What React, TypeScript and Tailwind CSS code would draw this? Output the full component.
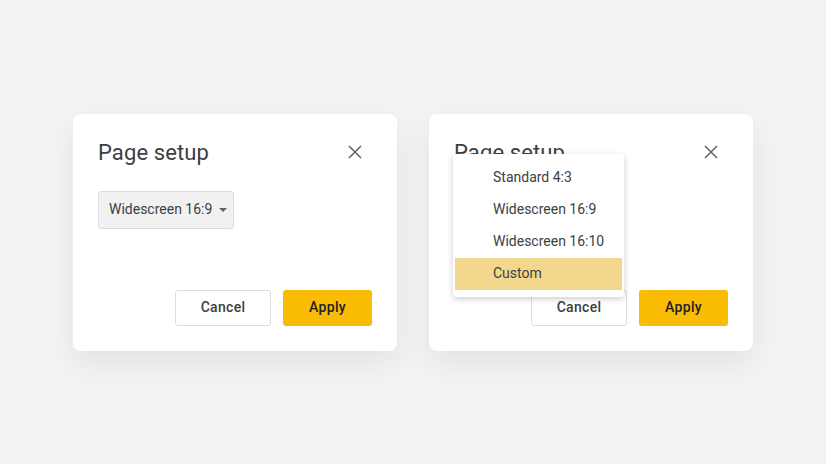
import { useState } from "react";

const sizes = ["Standard 4:3", "Widescreen 16:9", "Widescreen 16:10", "Custom"];

function CloseIcon() {
  return (
    <svg width="14" height="14" viewBox="0 0 14 14" aria-hidden="true">
      <path d="M1.5 1.5 L12.5 12.5 M12.5 1.5 L1.5 12.5" stroke="#5f6368" strokeWidth="1.5" strokeLinecap="square" />
    </svg>
  );
}

function Caret() {
  return (
    <svg width="8" height="4" viewBox="0 0 8 4" aria-hidden="true">
      <path d="M0 0 L8 0 L4 4 Z" fill="#5f6368" />
    </svg>
  );
}

function Dialog({ open }: { open: boolean }) {
  const [selected] = useState("Widescreen 16:9");

  return (
    <div className="relative w-[324px] h-[237px] bg-white rounded-[8px] shadow-[0_12px_32px_rgba(0,0,0,0.07)] flex flex-col pl-[25px] pr-[25px] pt-[27px] pb-[25px]">
      {/* header */}
      <div className="flex items-center justify-between h-[24px]">
        <h2 className="text-[22px] leading-[24px] text-[#3c4043] font-['Roboto',sans-serif] tracking-[0.1px]">
          Page setup
        </h2>
        <button className="mr-[10px] -mt-[1px] flex items-center justify-center">
          <CloseIcon />
        </button>
      </div>

      <div className="mt-[26px]">
        <button className="h-[38px] w-[136px] flex items-center pl-[10px] gap-[7px] bg-[#f1f1f1] border border-[#dcdcdc] rounded-[3px] text-[14px] text-[#3c4043] font-['Roboto',sans-serif]">
          <span>{selected}</span>
          <Caret />
        </button>
      </div>

      <div className="flex-1" />

      {/* footer */}
      <div className="flex justify-end gap-[12px]">
        <button className="h-[36px] w-[96px] bg-white border border-[#dadce0] rounded-[3px] text-[14px] font-medium tracking-[0.3px] text-[#3c4043] font-['Roboto',sans-serif]">
          Cancel
        </button>
        <button className="h-[36px] w-[89px] bg-[#fbbc04] rounded-[3px] text-[14px] font-medium tracking-[0.3px] text-[#202124] font-['Roboto',sans-serif]">
          Apply
        </button>
      </div>

      {open && (
        <ul className="absolute left-[24px] top-[40px] w-[171px] bg-white rounded-[3px] shadow-[0_2px_6px_rgba(0,0,0,0.2)] px-[2px] pt-[8px] pb-[7px] font-['Roboto',sans-serif]">
          {sizes.map((s) => (
            <li
              key={s}
              className={`h-[32px] flex items-center pl-[38px] text-[14px] text-[#3c4043] ${
                s === "Custom" ? "bg-[#f3d78c]" : ""
              }`}
            >
              {s}
            </li>
          ))}
        </ul>
      )}
    </div>
  );
}

export default function App() {
  return (
    <div className="w-[826px] h-[464px] bg-[#f3f3f3] flex items-center justify-center gap-[32px]">
      <Dialog open={false} />
      <Dialog open={true} />
    </div>
  );
}
